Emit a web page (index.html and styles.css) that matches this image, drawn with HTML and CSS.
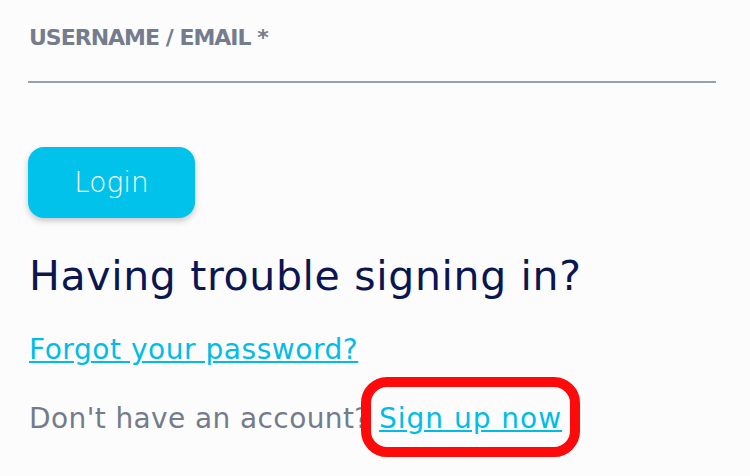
FILE: index.html
```html
<!DOCTYPE html>
<html lang="en">
<head>
  <meta charset="UTF-8">
  <meta name="viewport" content="width=device-width, initial-scale=1.0">
  <title>Login</title>
  <link rel="stylesheet" href="styles.css">
</head>
<body>
  <form class="login-form">
    <label class="field-label" for="username">USERNAME / EMAIL *</label>
    <input class="field-input" id="username" type="text">
    <button class="login-btn" type="button">Login</button>
  </form>
  <h2 class="trouble-title">Having trouble signing in?</h2>
  <p class="help-line"><a class="help-link" href="#">Forgot your password?</a></p>
  <p class="help-line muted">Don't have an account? <a class="help-link highlighted" href="#">Sign up now</a></p>
</body>
</html>
```
FILE: styles.css
```css
body {
  margin: 0;
  padding: 25px 34px 40px 28px;
  background-color: #fcfcfd;
  font-family: "DejaVu Sans", sans-serif;
}

.login-form {
  display: flex;
  flex-direction: column;
  align-items: flex-start;
}

.field-label {
  font-size: 22px;
  line-height: 26px;
  font-weight: bold;
  letter-spacing: -1px;
  color: #747c8d;
  padding-left: 1px;
}

.field-input {
  align-self: stretch;
  height: 30px;
  margin: 0;
  padding: 0;
  border: 0;
  border-bottom: 2px solid #97a0ae;
  background: transparent;
  outline: none;
  font: inherit;
}

.login-btn {
  margin-top: 64px;
  width: 167px;
  height: 71px;
  border: 0;
  border-radius: 16px;
  background-color: #00c2ea;
  color: #fff;
  font-family: inherit;
  font-size: 28px;
  font-weight: 300;
  box-shadow: 0 3px 6px rgba(0, 0, 0, 0.22);
}

.trouble-title {
  margin: 33px 0 0;
  padding-left: 1px;
  font-size: 41px;
  line-height: 50px;
  font-weight: normal;
  letter-spacing: 0.65px;
  color: #0b1650;
}

.help-line {
  margin: 32px 0 0;
  padding-left: 1px;
  font-size: 28px;
  line-height: 34px;
  letter-spacing: 0.55px;
}

.help-line.muted {
  margin-top: 35px;
  letter-spacing: 0.4px;
  color: #747b8a;
}

.help-link {
  color: #00bde8;
}

/* annotation box drawn over the sign up link */
.highlighted {
  position: relative;
  display: inline-block;
  letter-spacing: 1px;
}

.highlighted::after {
  content: "";
  position: absolute;
  top: -25px;
  bottom: -21px;
  left: -18px;
  right: -18px;
  border: 10px solid #fe0a0a;
  border-radius: 26px;
}
```
